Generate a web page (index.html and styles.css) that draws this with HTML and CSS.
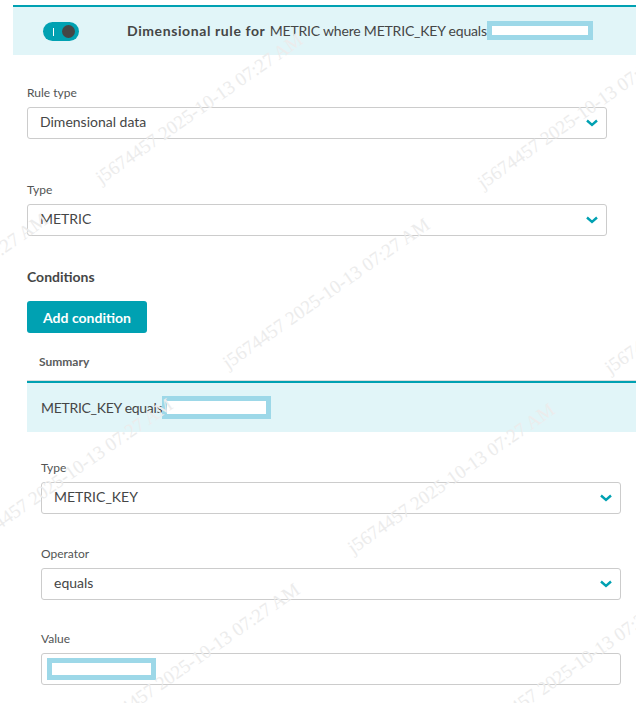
FILE: index.html
```html
<!DOCTYPE html>
<html>
<head>
<meta charset="utf-8">
<link rel="stylesheet" href="styles.css">
</head>
<body>
<div class="page">
  <section class="rule">
    <header class="rule-head">
      <span class="toggle"><span class="toggle-mark"></span><span class="toggle-knob"></span></span>
      <span class="rule-title"><b>Dimensional rule for</b> METRIC where METRIC_KEY equals<span class="redact redact-head"></span></span>
    </header>
    <div class="rule-body">
      <div class="field field-first">
        <label class="field-label">Rule type</label>
        <div class="select"><span>Dimensional data</span><svg class="chev" viewBox="0 0 12 8"><path d="M1 1.5 L6 6 L11 1.5" /></svg></div>
      </div>
      <div class="field field-second">
        <label class="field-label">Type</label>
        <div class="select"><span>METRIC</span><svg class="chev" viewBox="0 0 12 8"><path d="M1 1.5 L6 6 L11 1.5" /></svg></div>
      </div>
      <h3 class="section-title">Conditions</h3>
      <button class="btn">Add condition</button>
      <div class="cond-table">
        <div class="cond-head">Summary</div>
        <div class="cond-row">METRIC_KEY equals<span class="redact redact-row"></span></div>
        <div class="cond-detail">
          <div class="field">
            <label class="field-label">Type</label>
            <div class="select"><span>METRIC_KEY</span><svg class="chev" viewBox="0 0 12 8"><path d="M1 1.5 L6 6 L11 1.5" /></svg></div>
          </div>
          <div class="field field-gap">
            <label class="field-label">Operator</label>
            <div class="select"><span>equals</span><svg class="chev" viewBox="0 0 12 8"><path d="M1 1.5 L6 6 L11 1.5" /></svg></div>
          </div>
          <div class="field field-gap">
            <label class="field-label">Value</label>
            <div class="input"><span class="redact redact-input"></span></div>
          </div>
        </div>
      </div>
    </div>
  </section>
  <div class="watermark" aria-hidden="true">
    <span class="wm wm1">j5674457 2025-10-13 07:27 AM</span>
    <span class="wm wm2">j5674457 2025-10-13 07:27 AM</span>
    <span class="wm wm3">j5674457 2025-10-13 07:27 AM</span>
    <span class="wm wm4">j5674457 2025-10-13 07:27 AM</span>
    <span class="wm wm5">j5674457 2025-10-13 07:27 AM</span>
    <span class="wm wm6">j5674457 2025-10-13 07:27 AM</span>
    <span class="wm wm7">j5674457 2025-10-13 07:27 AM</span>
    <span class="wm wm8">j5674457 2025-10-13 07:27 AM</span>
    <span class="wm wm9">j5674457 2025-10-13 07:27 AM</span>
  </div>
</div>
</body>
</html>
```
FILE: styles.css
```css
html, body {
  margin: 0;
  padding: 0;
  background: #ffffff;
  overflow: hidden;
}
body {
  font-family: "Lato", "Liberation Sans", sans-serif;
  color: #454646;
  width: 636px;
  height: 703px;
}
.page {
  position: relative;
  padding: 5px 0 0 13px;
  height: 698px;
  overflow: hidden;
}
.rule {
  width: 660px;
}
.rule-head {
  display: flex;
  align-items: center;
  height: 48px;
  border-top: 2px solid #00a1b2;
  background: #e1f5f8;
  padding-left: 30px;
  font-size: 14px;
}
.toggle {
  position: relative;
  display: flex;
  align-items: center;
  width: 36px;
  height: 19px;
  border-radius: 10px;
  background: #00a1b2;
  margin-top: 1px;
}
.toggle-mark {
  width: 1px;
  height: 8px;
  background: #ffffff;
  margin-left: 10px;
}
.toggle-knob {
  width: 13px;
  height: 13px;
  border-radius: 50%;
  background: #454646;
  margin-left: 8px;
}
.rule-title {
  display: block;
  margin-left: 48px;
  white-space: nowrap;
  line-height: 20px;
  letter-spacing: -0.2px;
}
.rule-title b {
  font-weight: 700;
  letter-spacing: 0.6px;
  margin-right: 1px;
}
.redact {
  display: inline-block;
  box-sizing: border-box;
  background: #ffffff;
  border: 5px solid #9dd8e8;
  vertical-align: middle;
}
.redact-head {
  width: 106px;
  height: 19px;
  margin-top: -3px;
}
.rule-body {
  padding: 0 0 0 14px;
}
.field {
  display: flex;
  flex-direction: column;
  width: 580px;
}
.field-first {
  margin-top: 30px;
}
.field-second {
  margin-top: 43px;
}
.field-gap {
  margin-top: 32px;
}
.field-gap + .field-gap {
  margin-top: 31px;
}
.field-label {
  font-size: 12px;
  line-height: 16px;
  color: #525454;
  margin-bottom: 6px;
}
.select, .input {
  box-sizing: border-box;
  height: 32px;
  border: 1px solid #cccccc;
  border-radius: 3px;
  display: flex;
  align-items: center;
  justify-content: space-between;
  padding: 0 8px 2px 12px;
  font-size: 14px;
  line-height: 18px;
  background: #ffffff;
}
.chev {
  width: 12px;
  height: 8px;
  fill: none;
  stroke: #00a1b2;
  stroke-width: 2.4;
  margin-top: 2px;
}
.input {
  padding: 0 0 0 5px;
}
.section-title {
  margin: 31px 0 0;
  font-size: 14px;
  line-height: 20px;
  font-weight: 700;
}
.btn {
  display: block;
  margin-top: 14px;
  height: 32px;
  width: 120px;
  border: none;
  border-radius: 3px;
  background: #00a1b2;
  color: #ffffff;
  font-family: inherit;
  font-size: 14px;
  font-weight: 700;
  padding: 0;
}
.cond-table {
  margin-top: 12px;
}
.cond-head {
  font-size: 12px;
  line-height: 16px;
  font-weight: 700;
  color: #5a5c5c;
  padding: 9px 12px 10px;
  border-bottom: 1px solid #dcdcdc;
}
.cond-row {
  display: flex;
  align-items: center;
  height: 49px;
  border-top: 2px solid #00a1b2;
  background: #e1f5f8;
  padding-left: 14px;
  font-size: 14px;
  letter-spacing: -0.3px;
}
.redact-row {
  width: 109px;
  height: 23px;
}
.cond-detail {
  padding: 28px 0 0 14px;
}
.redact-input {
  width: 109px;
  height: 22px;
}
.watermark {
  position: absolute;
  inset: 0;
  pointer-events: none;
}
.wm {
  position: absolute;
  font-family: "Liberation Serif", serif;
  font-size: 19px;
  color: #ececec;
  white-space: nowrap;
  transform-origin: 0 100%;
  transform: rotate(-35deg);
  line-height: 1;
}
.wm1 { left: 103px; top: 168px; }
.wm2 { left: 230px; top: 353px; }
.wm3 { left: 355px; top: 538px; }
.wm4 { left: 485px; top: 173px; }
.wm5 { left: 612px; top: 358px; }
.wm6 { left: -27px; top: 533px; }
.wm7 { left: -152px; top: 348px; }
.wm8 { left: 100px; top: 718px; }
.wm9 { left: 482px; top: 723px; }
```
